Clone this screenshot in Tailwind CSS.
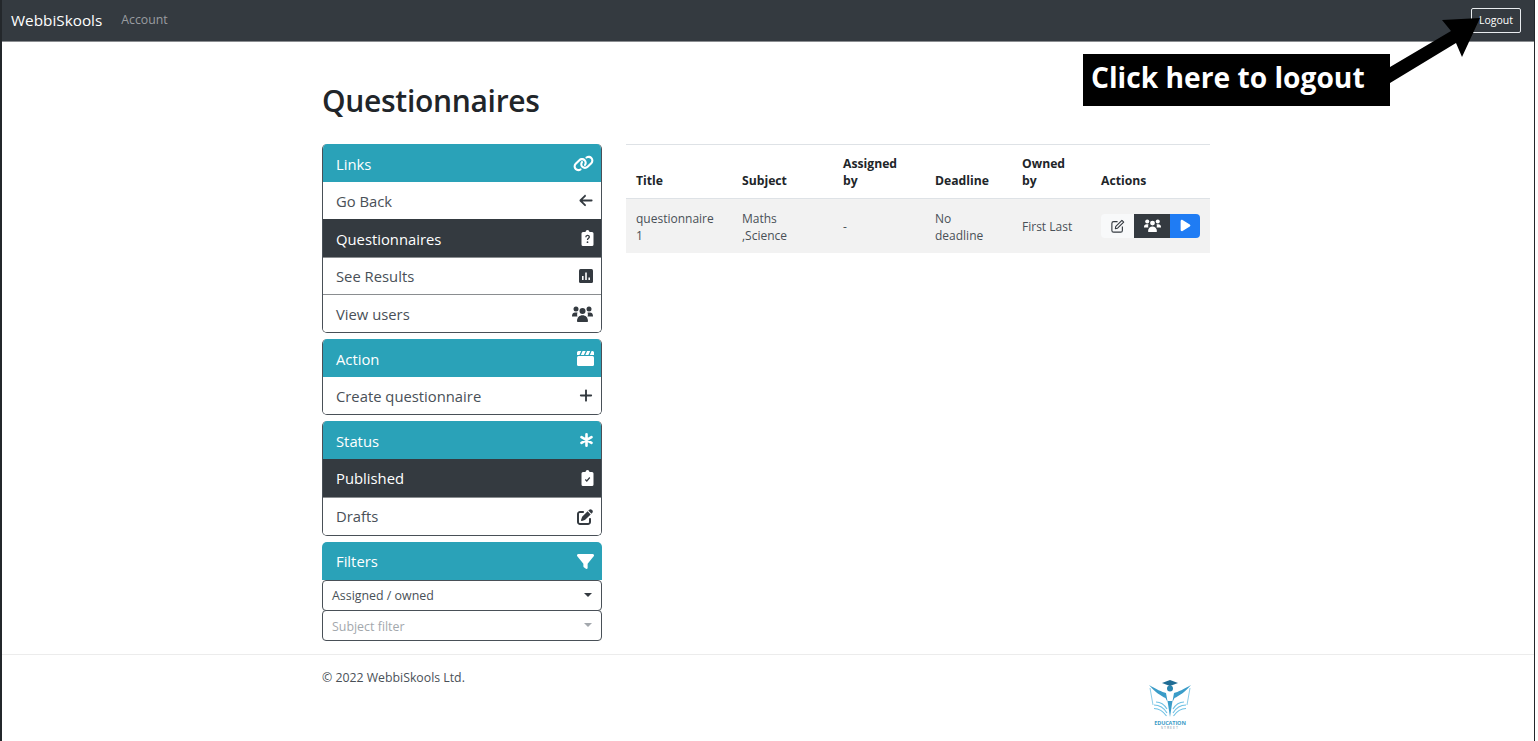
<!DOCTYPE html>
<html lang="en">
<head>
<meta charset="utf-8">
<title>Questionnaires</title>
<script src="https://cdn.jsdelivr.net/npm/@tailwindcss/browser@4"></script>
</head>
<body class="bg-white font-['Open_Sans','Noto_Sans',sans-serif] text-[#212529]">
<div class="relative h-[741px] w-[1538px] overflow-hidden">
  <div class="flex h-[741px] w-[1535px] flex-col border-l-2 border-r border-[#23272b]">
    <header class="flex h-[42px] shrink-0 items-center justify-between border-b border-[#8a8d90] bg-[#343a40] pl-[9px] pr-[13px]">
      <div class="flex items-center">
        <span class="text-[15.3px] text-white">WebbiSkools</span>
        <span class="ml-[19px] pb-[1px] text-[12.3px] text-[#9a9da0]">Account</span>
      </div>
      <button class="flex h-[25px] w-[50px] items-center justify-center rounded-[2px] border border-[#e9ecef] text-[10.5px] text-white">Logout</button>
    </header>
    <main class="mx-auto flex w-[888px] grow flex-col pt-[38px] -translate-x-[2px]">
      <h1 class="h-[64px] text-[30px] leading-[42px] font-semibold tracking-[-0.3px] text-[#212529]">Questionnaires</h1>
      <div class="flex gap-[24px]">
        <aside class="flex w-[280px] flex-col gap-[6px] text-[14.8px]">
          <section class="overflow-hidden rounded-[5px] border-b border-x border-[#495057]">
            <div class="-mx-px flex h-[38px] items-center justify-between bg-[#2aa2b8] pl-[14px] pr-[8px] pt-[2px] text-white">
              <span>Links</span>
              <svg class="-mt-[2px] h-[17px] w-[21px]" viewBox="0 0 640 512" fill="#fff"><path d="M579.8 267.700c56.500-56.500 56.500-148 0-204.500c-50-50-128.800-56.500-186.300-15.400l-1.600 1.100c-14.400 10.300-17.700 30.300-7.400 44.600s30.300 17.700 44.600 7.400l1.600-1.100c32.100-22.900 76-19.300 103.800 8.600c31.500 31.500 31.500 82.500 0 114L422.300 334.800c-31.500 31.500-82.500 31.500-114 0c-27.900-27.900-31.500-71.800-8.600-103.800l1.100-1.600c10.300-14.400 6.900-34.400-7.400-44.600s-34.400-6.900-44.600 7.400l-1.100 1.600C206.500 251.200 213 330 263 380c56.500 56.500 148 56.500 204.500 0L579.800 267.700zM60.200 244.300c-56.500 56.500-56.500 148 0 204.500c50 50 128.800 56.500 186.300 15.400l1.600-1.100c14.400-10.300 17.700-30.300 7.400-44.600s-30.300-17.700-44.600-7.400l-1.600 1.100c-32.100 22.900-76 19.300-103.800-8.600C74 372 74 321 105.500 289.500L217.700 177.200c31.500-31.500 82.500-31.500 114 0c27.900 27.900 31.500 71.800 8.600 103.900l-1.100 1.600c-10.300 14.400-6.900 34.400 7.400 44.600s34.400 6.900 44.600-7.400l1.100-1.600C433.500 260.800 427 182 377 132c-56.500-56.500-148-56.500-204.500 0L60.200 244.300z"/></svg>
            </div>
            <div class="flex h-[37px] items-center justify-between bg-white pl-[13px] pr-[8px] pt-[2px] text-[#495057]">
              <span>Go Back</span>
              <svg class="-mt-[2px] h-[15px] w-[14px]" viewBox="0 0 448 512" fill="#343a40"><path d="M9.400 233.400c-12.500 12.500-12.500 32.800 0 45.300l160 160c12.500 12.500 32.800 12.500 45.300 0s12.500-32.800 0-45.300L109.200 288 416 288c17.700 0 32-14.300 32-32s-14.300-32-32-32l-306.700 0L214.600 118.600c12.500-12.500 12.500-32.800 0-45.300s-32.800-12.500-45.300 0l-160 160z"/></svg>
            </div>
            <div class="flex h-[39px] items-center justify-between border-b border-[#8a8d90] bg-[#343a40] pl-[13px] pr-[7px] pt-[2px] text-white">
              <span>Questionnaires</span>
              <svg class="-mt-[2px] h-[16px] w-[13px]" viewBox="0 0 12 16"><path fill="#fff" d="M1.500 2H4C4.200.8 5 0 6 0s1.800.8 2 2h2.500A1.500 1.500 0 0 1 12 3.500v11a1.500 1.500 0 0 1-1.500 1.500h-9A1.500 1.500 0 0 1 0 14.500v-11A1.500 1.500 0 0 1 1.500 2z"/><path fill="none" stroke="#343a40" stroke-width="1.300" d="M4.300 7.300c0-2.400 3.500-2.400 3.500-.3 0 1.300-1.800 1.300-1.800 2.900"/><circle cx="6" cy="12.200" r=".9" fill="#343a40"/></svg>
            </div>
            <div class="flex h-[37px] items-center justify-between border-b border-[#8a8d90] bg-white pl-[13px] pr-[8px] pt-[1px] text-[#495057]">
              <span>See Results</span>
              <svg class="-mt-[1px] h-[14px] w-[14px]" viewBox="0 0 14 14"><rect width="14" height="14" rx="1.500" fill="#343a40"/><path stroke="#fff" stroke-width="1.600" d="M3.800 11V7M7 11V3.500M10.200 11V8.500"/></svg>
            </div>
            <div class="flex h-[37px] items-center justify-between bg-white pl-[13px] pr-[8px] pt-[2px] text-[#495057]">
              <span>View users</span>
              <svg class="-mt-[2px] h-[16px] w-[21px]" viewBox="0 0 21 16" fill="#343a40"><circle cx="4" cy="3" r="2.500"/><circle cx="17" cy="3" r="2.500"/><circle cx="10.500" cy="5" r="3"/><path d="M0 10c0-2.500 1.500-3.500 3-3.500h2.500C5 8 5 9.500 5.500 10.500H0zM21 10c0-2.500-1.500-3.500-3-3.500h-2.500c.5 1.500.5 3 0 4h5.500zM5 15.200c0-4 2.500-6 5.500-6s5.500 2 5.500 6c0 .5-.3.800-.8.800H5.800c-.5 0-.8-.3-.8-.8z"/></svg>
            </div>
          </section>
          <section class="overflow-hidden rounded-[5px] border-b border-x border-[#495057]">
            <div class="-mx-px flex h-[38px] items-center justify-between bg-[#2aa2b8] pl-[14px] pr-[8px] pt-[2px] text-white">
              <span>Action</span>
              <svg class="-mt-[2px] h-[15px] w-[17px]" viewBox="0 0 17 15"><rect y="5" width="17" height="10" rx="1.500" fill="#fff"/><path fill="#fff" d="M1.500 0H15.500A1.500 1.500 0 0 1 17 1.500V4H0V1.500A1.500 1.500 0 0 1 1.500 0z"/><path stroke="#2aa2b8" stroke-width="1.300" d="M3 4.200L5 -.2M7.500 4.200L9.500 -.2M12 4.200L14 -.2"/></svg>
            </div>
            <div class="flex h-[37px] items-center justify-between bg-white pl-[13px] pr-[8px] pt-[1px] text-[#495057]">
              <span>Create questionnaire</span>
              <svg class="-mt-[1px] h-[15px] w-[14px]" viewBox="0 0 448 512" fill="#343a40"><path d="M256 80c0-17.700-14.300-32-32-32s-32 14.300-32 32V224H48c-17.700 0-32 14.300-32 32s14.300 32 32 32H192V432c0 17.700 14.300 32 32 32s32-14.300 32-32V288H400c17.700 0 32-14.300 32-32s-14.300-32-32-32H256V80z"/></svg>
            </div>
          </section>
          <section class="overflow-hidden rounded-[5px] border-b border-x border-[#495057]">
            <div class="-mx-px flex h-[38px] items-center justify-between bg-[#2aa2b8] pl-[14px] pr-[9px] pt-[2px] text-white">
              <span>Status</span>
              <svg class="-mt-[2px] h-[14px] w-[13px]" viewBox="0 0 13 14" stroke="#fff" stroke-width="2.600" stroke-linecap="round"><path d="M6.500 1.300V12.700M1.500 4.100L11.500 9.900M11.500 4.100L1.500 9.900"/></svg>
            </div>
            <div class="flex h-[39px] items-center justify-between border-b border-[#8a8d90] bg-[#343a40] pl-[13px] pr-[7px] pt-[1px] text-white">
              <span>Published</span>
              <svg class="-mt-[1px] h-[16px] w-[13px]" viewBox="0 0 12 16"><path fill="#fff" d="M1.500 2H4C4.200.8 5 0 6 0s1.800.8 2 2h2.500A1.500 1.500 0 0 1 12 3.500v11a1.500 1.500 0 0 1-1.500 1.500h-9A1.500 1.500 0 0 1 0 14.500v-11A1.500 1.500 0 0 1 1.500 2z"/><path fill="none" stroke="#343a40" stroke-width="1.200" d="M3.800 9.500L5.300 11L8.300 7.500"/></svg>
            </div>
            <div class="flex h-[37px] items-center justify-between bg-white pl-[13px] pr-[8px] text-[#495057]">
              <span>Drafts</span>
              <svg class="h-[16px] w-[16px]" viewBox="0 0 512 512" fill="#343a40"><path d="M471.600 21.700c-21.900-21.900-57.300-21.900-79.200 0L362.300 51.700l97.900 97.900 30.100-30.100c21.900-21.900 21.900-57.300 0-79.200L471.600 21.700zm-299.200 220c-6.100 6.100-10.800 13.600-13.500 21.900l-29.600 88.800c-2.900 8.600-.6 18.100 5.800 24.600s15.900 8.700 24.600 5.800l88.800-29.600c8.200-2.700 15.700-7.400 21.900-13.500L437.700 172.300 339.700 74.300 172.400 241.700zM96 64C43 64 0 107 0 160V416c0 53 43 96 96 96H352c53 0 96-43 96-96V320c0-17.700-14.300-32-32-32s-32 14.300-32 32v96c0 17.700-14.300 32-32 32H96c-17.700 0-32-14.300-32-32V160c0-17.700 14.300-32 32-32h96c17.700 0 32-14.300 32-32s-14.300-32-32-32H96z"/></svg>
            </div>
          </section>
          <section>
            <div class="flex h-[38px] items-center justify-between rounded-t-[5px] bg-[#2aa2b8] pl-[14px] pr-[8px] text-white">
              <span>Filters</span>
              <svg class="h-[17px] w-[17px]" viewBox="0 0 512 512" fill="#fff"><path d="M3.900 54.900C10.500 40.900 24.500 32 40 32H472c15.500 0 29.500 8.900 36.100 22.900s4.600 30.500-5.200 42.500L320 320.900V448c0 12.100-6.800 23.200-17.700 28.600s-23.800 4.300-33.500-3l-64-48c-8.100-6-12.800-15.500-12.800-25.600V320.900L9 97.300C-.7 85.400-2.800 68.800 3.900 54.900z"/></svg>
            </div>
            <div class="flex h-[31px] items-center justify-between rounded-[4px] border border-[#495057] bg-white pl-[9px] pr-[9px] pt-[1px] text-[12.400px] text-[#495057]">
              <span>Assigned / owned</span>
              <span class="-mt-[2px] h-0 w-0 border-x-[4px] border-t-[4px] border-x-transparent border-t-[#343a40]"></span>
            </div>
            <div class="-mt-px flex h-[31px] items-center justify-between rounded-[4px] border border-[#495057] bg-white pl-[9px] pr-[9px] pt-[3px] text-[12.400px] text-[#a3a8ad]">
              <span>Subject filter</span>
              <span class="-mt-[4px] h-0 w-0 border-x-[4px] border-t-[4px] border-x-transparent border-t-[#a3a8ad]"></span>
            </div>
          </section>
        </aside>
        <div class="w-[584px]">
          <table class="w-[584px] table-fixed border-collapse text-[12px] leading-[17px]">
            <colgroup>
              <col class="w-[106px]"><col class="w-[101px]"><col class="w-[92px]"><col class="w-[87px]"><col class="w-[79px]"><col class="w-[119px]">
            </colgroup>
            <thead>
              <tr class="h-[54px] border-y border-t-[#dee2e6] border-b-[#dee2e6] align-bottom text-left text-[12.200px] font-bold">
                <th class="px-[10px] pb-[9px]">Title</th>
                <th class="px-[10px] pb-[9px]">Subject</th>
                <th class="px-[10px] pb-[9px]">Assigned<br>by</th>
                <th class="px-[10px] pb-[9px]">Deadline</th>
                <th class="px-[10px] pb-[9px]">Owned<br>by</th>
                <th class="px-[10px] pb-[9px]">Actions</th>
              </tr>
            </thead>
            <tbody>
              <tr class="h-[54px] bg-[#f2f2f2] text-[#495057]">
                <td class="px-[10px] pt-[2px]">questionnaire 1</td>
                <td class="px-[10px] pt-[2px]">Maths ,Science</td>
                <td class="px-[10px] pt-[2px]">-</td>
                <td class="px-[10px] pt-[2px]">No deadline</td>
                <td class="px-[10px] pt-[1px]">First Last</td>
                <td class="px-[10px]">
                  <div class="flex h-[24px] w-[99px] overflow-hidden rounded-[4px]">
                    <span class="flex w-[33px] items-center justify-center bg-[#f8f9fa]">
                      <svg class="h-[14px] w-[14px]" viewBox="0 0 16 16" fill="none" stroke="#343a40" stroke-width="1.300"><path d="M7.500 3H3a2 2 0 0 0-2 2v8a2 2 0 0 0 2 2h8a2 2 0 0 0 2-2V8.500"/><path d="M5.500 8.500L12.500 1.500L14.500 3.500L7.500 10.500L5 11z" stroke-linejoin="round"/></svg>
                    </span>
                    <span class="flex w-[36px] items-center justify-center bg-[#343a40]">
                      <svg class="h-[13px] w-[17px]" viewBox="0 0 21 16" fill="#fff"><circle cx="4" cy="3" r="2.500"/><circle cx="17" cy="3" r="2.500"/><circle cx="10.500" cy="5" r="3"/><path d="M0 10c0-2.500 1.500-3.500 3-3.500h2.500C5 8 5 9.500 5.500 10.500H0zM21 10c0-2.500-1.500-3.500-3-3.500h-2.500c.5 1.500.5 3 0 4h5.500zM5 15.200c0-4 2.500-6 5.500-6s5.500 2 5.500 6c0 .5-.3.800-.8.800H5.800c-.5 0-.8-.3-.8-.8z"/></svg>
                    </span>
                    <span class="flex w-[30px] items-center justify-center bg-[#1f7cf4]">
                      <svg class="h-[13px] w-[11px]" viewBox="0 0 384 512" fill="#fff"><path d="M73 39c-14.800-9.100-33.400-9.400-48.500-.9S0 62.600 0 80V432c0 17.400 9.400 33.400 24.500 41.900s33.700 8.100 48.500-.9L361 297c14.300-8.700 23-24.200 23-41s-8.700-32.200-23-41L73 39z"/></svg>
                    </span>
                  </div>
                </td>
              </tr>
            </tbody>
          </table>
        </div>
      </div>
    </main>
    <footer class="h-[87px] shrink-0 border-t border-[#ececec]">
      <div class="relative mx-auto w-[888px] -translate-x-[2px] pt-[14px] text-[12.300px] text-[#495057]">
        <p>© 2022 WebbiSkools Ltd.</p>
        <div class="absolute left-[825px] top-[25px] flex w-[46px] flex-col items-center">
          <svg class="h-[38px] w-[46px]" viewBox="0 0 46 38">
            <path fill="none" stroke="#8ccde8" stroke-width="1" d="M3 8L6 25M43 8L40 25"/>
            <path fill="none" stroke="#6ec1e4" stroke-width="1.100" d="M7 25C12 25 17 28 20 33M7 28.500C12 28.500 16 31 19.500 36M9 22C13 22 17 24 20 29M39 25C34 25 29 28 26 33M39 28.500C34 28.500 30 31 26.500 36M37 22C33 22 29 24 26 29"/>
            <path fill="#3a9cc8" d="M2 5C9 9 15 12 19 13L21 24L23 37L25 24L27 13C31 12 37 9 44 5C38 12 32 16 27.500 18L26 21L20 21L18.500 18C14 16 8 12 2 5z"/>
            <circle cx="23" cy="8.500" r="3" fill="#2a86b0"/>
            <path fill="#1f6c94" d="M23 0L31 3L23 6L15 3z"/>
          </svg>
          <span class="mt-[2px] text-[5.500px] leading-[6px] font-bold tracking-[-0.1px] text-[#3d9cc7]">EDUCATION</span>
          <span class="text-[3.500px] leading-[4px] tracking-[1px] text-[#6f8fa3]">STREET</span>
        </div>
      </div>
    </footer>
  </div>
  <div class="absolute left-[1083px] top-[54px] flex h-[52px] w-[307px] items-center bg-black pb-[5px] pl-[8px] text-[28.200px] font-bold text-white">Click here to logout</div>
  <svg class="absolute left-[1380px] top-[10px] h-[80px] w-[110px]" viewBox="0 0 110 80"><path fill="#000" d="M10 57L71 21L62 10L100 8L82 47L76 33L10 73z"/></svg>
</div>
</body>
</html>
